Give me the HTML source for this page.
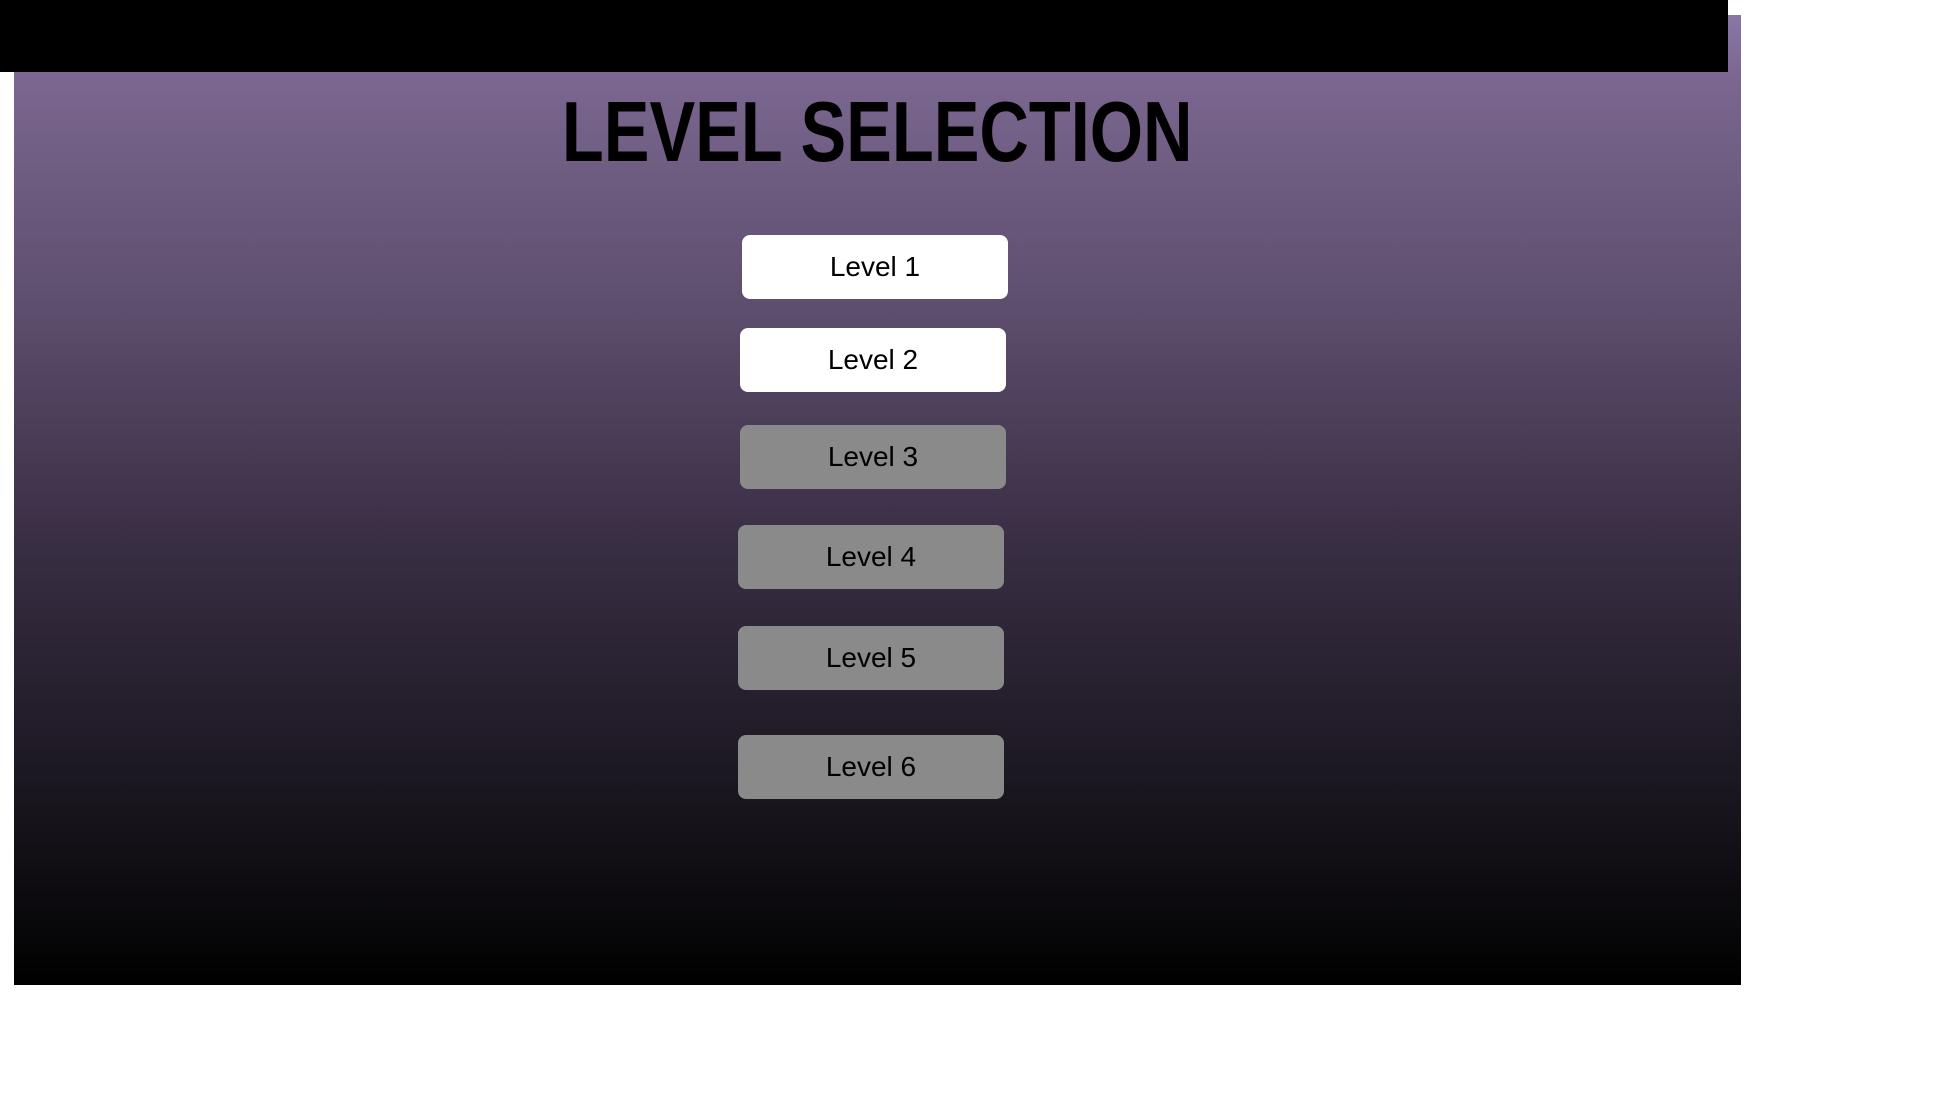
<!DOCTYPE html>
<html><head><meta charset="utf-8"><style>
html,body{margin:0;padding:0;width:1935px;height:1095px;background:#fff;overflow:hidden;position:relative;font-family:"Liberation Sans",sans-serif}
#bg{position:absolute;left:14px;top:15px;width:1727px;height:970px;background:linear-gradient(#8a77a6 0px,#7b6790 60px,#5c4d6c 300px,#3a2f45 520px,#1c1822 760px,#000 970px)}
#bar{position:absolute;left:0;top:0;width:1728px;height:72px;background:#000}
#title{position:absolute;left:0;width:1754px;top:88px;text-align:center;font-weight:bold;font-size:85px;line-height:90px;color:#000}
#title span{display:inline-block;transform:scaleX(0.806);transform-origin:center}
.b{position:absolute;width:266px;height:64px;border-radius:8px;text-align:center;line-height:64px;font-size:28px;color:#000}
.w{background:#fff}.g{background:#8a8a8a}
</style></head><body>
<div id="bg"></div><div id="bar"></div>
<div id="title"><span>LEVEL SELECTION</span></div>
<div class="b w" style="left:742px;top:235px">Level 1</div>
<div class="b w" style="left:740px;top:328px">Level 2</div>
<div class="b g" style="left:740px;top:425px">Level 3</div>
<div class="b g" style="left:738px;top:525px">Level 4</div>
<div class="b g" style="left:738px;top:626px">Level 5</div>
<div class="b g" style="left:738px;top:735px">Level 6</div>
</body></html>
